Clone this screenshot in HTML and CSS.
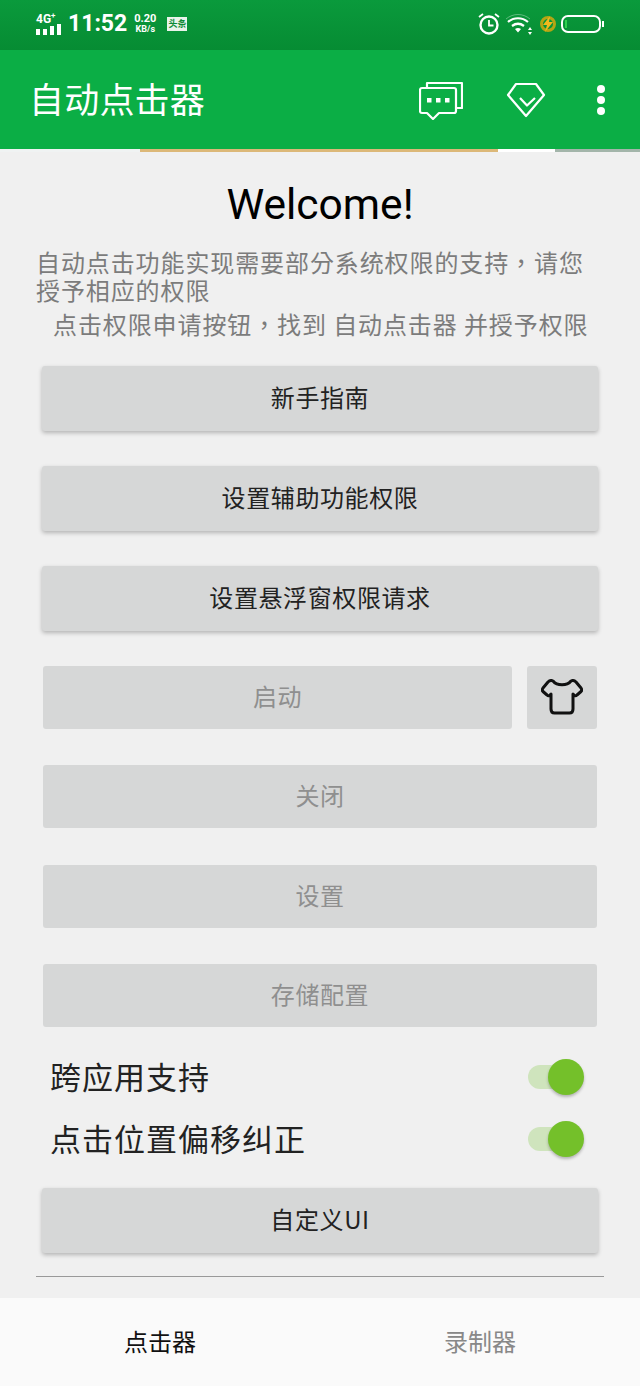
FILE: index.html
```html
<!DOCTYPE html>
<html lang="zh-CN">
<head>
    <meta charset="UTF-8">
    <title>自动点击器</title>
    <link rel="stylesheet" href="styles.css">
</head>
<body>

<header class="status">
    <div class="status-left">
        <div class="signal">
            <span class="signal-label">4G<sup>+</sup></span>
            <svg class="signal-bars" width="26" height="11" viewBox="0 0 26 11"><path fill="#fff" d="M0 5h4v6H0zM7 5h4v6H7zM14 2h4v9h-4zM21 0h4v11h-4z"/></svg>
        </div>
        <span class="clock">11:52</span>
        <div class="speed"><span>0.20</span><span class="speed-unit">KB/s</span></div>
        <span class="news">头条</span>
    </div>
    <div class="status-right">
        <svg width="24" height="24" viewBox="0 0 24 24" fill="none" stroke="#fff"><circle cx="12" cy="13" r="8.500" stroke-width="2.400"/><path stroke-width="1.800" d="M12 8v5.500h4.500M2 5l4-3M22 5l-4-3"/></svg>
        <svg width="30" height="24" viewBox="0 0 30 24" fill="none" stroke="#fff" stroke-width="2.200"><path stroke-opacity=".35" stroke-width="1" d="M1 7c7-6 17-6 24 0"/><path d="M3 10c6-5 14-5 20 0M7 14c4-3 8-3 12 0"/><path fill="#fff" stroke="none" d="M10 17c2-1.500 4-1.500 6 0l-3 3.500zM25 15l2 3h-4zM25 23l2-3h-4z"/></svg>
        <svg class="bolt" width="18" height="20" viewBox="0 0 18 20"><circle cx="9" cy="10" r="6.500" fill="none" stroke="#b3a514" stroke-width="3"/><path fill="#f2b81c" d="M11 2L4 11h4l-2 7 8-10h-4z"/></svg>
        <svg width="44" height="20" viewBox="0 0 44 20" fill="none"><rect x="1" y="2" width="38" height="16" rx="6" stroke="#fff" stroke-width="2"/><rect x="4" y="6" width="2" height="8" fill="#2fd04e"/><path stroke="#fff" stroke-width="2" d="M42 7v6"/></svg>
    </div>
</header>

<div class="toolbar">
    <h1 class="toolbar-title">自动点击器</h1>
    <div class="toolbar-icons">
        <svg class="icon-msg" width="44" height="39" viewBox="0 0 44 39" fill="none" stroke="#fff" stroke-width="2.200" stroke-linejoin="round"><path d="M8 7V2h35v25h-6"/><path d="M3 7h32a2 2 0 0 1 2 2v21a2 2 0 0 1-2 2H20l-6 6-6-6H3a2 2 0 0 1-2-2V9a2 2 0 0 1 2-2z"/><path fill="#fff" stroke="none" d="M8 17h4.500v4.500H8zM17 17h4.500v4.500H17zM26 17h4.500v4.500H26z"/></svg>
        <svg class="icon-gem" width="40" height="36" viewBox="0 0 40 36" fill="none" stroke="#fff" stroke-width="2.200" stroke-linejoin="round"><path d="M10 2h20l8 11-18 21L2 13z"/><path d="M14 16l7 7.500 8-7.500"/></svg>
        <div class="more"><i></i><i></i><i></i></div>
    </div>
</div>

<div class="strip"><span class="strip-ad"></span><span class="strip-gap"></span><span class="strip-end"></span></div>

<main class="content">
    <h2 class="welcome">Welcome!</h2>
    <p class="intro" lang="zh-Hant">自动点击功能实现需要部分系统权限的支持，请您授予相应的权限</p>
    <p class="hint" lang="zh-Hant">点击权限申请按钮，找到 自动点击器 并授予权限</p>

    <div class="actions">
        <button class="btn">新手指南</button>
        <button class="btn">设置辅助功能权限</button>
        <button class="btn">设置悬浮窗权限请求</button>
        <div class="btn-row">
            <button class="btn btn-off btn-grow">启动</button>
            <button class="btn btn-off btn-icon" aria-label="皮肤">
                <svg width="42" height="36" viewBox="0 0 42 36" fill="none" stroke="#111" stroke-width="3" stroke-linejoin="round"><path d="M12 2c4 5 14 5 18 0 2-1 4 0 5 1l5 6c1 1.500 1 2.500 0 3.500L36 16c-1 1-2 1-3 0l-1-1v15c0 2.500-1 4-3.500 4h-15C11 34 10 32.500 10 30V15l-1 1c-1 1-2 1-3 0l-4-3.500c-1-1-1-2 0-3.500l5-6c1-1 3-2 5-1z"/></svg>
            </button>
        </div>
        <button class="btn btn-off">关闭</button>
        <button class="btn btn-off">设置</button>
        <button class="btn btn-off">存储配置</button>
    </div>

    <div class="switches">
        <label class="switch-row"><span>跨应用支持</span><span class="switch"><i></i></span></label>
        <label class="switch-row"><span>点击位置偏移纠正</span><span class="switch"><i></i></span></label>
    </div>

    <button class="btn btn-custom">自定义UI</button>
    <hr class="divider">
</main>

<nav class="tabs">
    <span class="tab tab-active">点击器</span>
    <span class="tab">录制器</span>
</nav>

</body>
</html>
```

FILE: styles.css
```css
* {
    margin: 0;
    padding: 0;
    box-sizing: border-box;
}

html, body {
    height: 1386px;
    overflow: hidden;
}

body {
    display: flex;
    flex-direction: column;
    background: #f0f0f0;
    font-family: "Noto Sans CJK SC", Roboto, sans-serif;
}

/* status bar */
.status {
    height: 50px;
    background: linear-gradient(#0a9a3c, #068c33);
    color: #fff;
    display: flex;
    justify-content: space-between;
    align-items: center;
    padding: 0 35px 2px 36px;
}
.status-left, .status-right {
    display: flex;
    align-items: center;
}
.status-right {
    gap: 4px;
}
.signal {
    width: 26px;
    display: flex;
    flex-direction: column;
    font: bold 12px/11px Roboto, sans-serif;
}
.signal-label sup {
    font-size: 8px;
    line-height: 0;
}
.signal-bars {
    margin-top: -1px;
}
.clock {
    font: bold 23px/30px Roboto, sans-serif;
    margin-left: 6px;
}
.speed {
    display: flex;
    flex-direction: column;
    align-items: center;
    font: bold 11px/11px Roboto, sans-serif;
    margin-left: 7px;
}
.speed-unit {
    font-size: 9px;
}
.news {
    width: 20px;
    height: 14px;
    margin-left: 11px;
    background: #e9f3ea;
    color: #0a8a35;
    font: bold 9px/14px "Noto Sans CJK SC", sans-serif;
    text-align: center;
}

/* toolbar */
.toolbar {
    height: 99px;
    background: #0bae45;
    display: flex;
    justify-content: space-between;
    align-items: center;
    padding: 0 35px 0 29px;
}
.toolbar-title {
    color: #fff;
    font-size: 35px;
    font-weight: 400;
    line-height: 50px;
    letter-spacing: .2px;
    padding-bottom: 3px;
}
.toolbar-icons {
    display: flex;
    align-items: center;
}
.icon-msg {
    margin-top: 2px;
}
.icon-gem {
    margin: 1px 0 0 43px;
}
.more {
    margin-left: 51px;
    display: flex;
    flex-direction: column;
    gap: 3px;
}
.more i {
    width: 8px;
    height: 8px;
    border-radius: 50%;
    background: #fff;
}

/* thin banner left over below the toolbar */
.strip {
    height: 3px;
    display: flex;
    background: #f0f3f3;
}
.strip-ad {
    width: 358px;
    margin-left: 140px;
    background: #dcb878;
}
.strip-gap {
    width: 57px;
    background: #fff;
}
.strip-end {
    flex: 1;
    background: #a3b5aa;
}

.content {
    flex: 1;
    display: flex;
    flex-direction: column;
    padding: 0 36px;
}
.welcome {
    font: 400 42.500px/56px Roboto, sans-serif;
    color: #000;
    text-align: center;
    margin-top: 25px;
}
.intro, .hint {
    font-family: "Noto Sans CJK TC", sans-serif;
    font-size: 24px;
    line-height: 28px;
    color: #7c7c7c;
    letter-spacing: .9px;
}
.intro {
    margin-top: 15px;
}
.hint {
    margin-top: 6px;
    padding-left: 17px;
    white-space: nowrap;
}

.actions {
    margin-top: 28px;
    display: flex;
    flex-direction: column;
    gap: 35px;
    padding: 0 6px;
}
.btn {
    display: block;
    width: 100%;
    height: 65px;
    padding-bottom: 3px;
    border: 0;
    border-radius: 3px;
    background: #d6d7d7;
    color: #222;
    font: 400 24px/30px "Noto Sans CJK SC", sans-serif;
    letter-spacing: .6px;
    box-shadow: 0 2px 4px rgba(0, 0, 0, .25);
}
.btn-off {
    width: auto;
    height: 63px;
    margin: 0 1px 1.500px;
    color: #8f8f8f;
    box-shadow: none;
}
.btn-row {
    display: flex;
    gap: 15px;
    padding: 0 1px;
    margin-top: -.300px;
}
.btn-row .btn-off {
    margin: 0 0 1.500px;
}
.btn-grow {
    flex: 1;
}
.btn-icon {
    width: 70px;
    padding: 0;
    display: flex;
    align-items: center;
    justify-content: center;
}

.switches {
    margin-top: 18.300px;
}
.switch-row {
    height: 62px;
    display: flex;
    justify-content: space-between;
    align-items: center;
    padding: 0 26px 6px 14px;
    font-size: 31px;
    letter-spacing: 1px;
    color: #222;
}
.switch {
    position: relative;
    width: 50px;
    height: 24px;
    margin-top: 4px;
    border-radius: 12px;
    background: #cfe4bd;
}
.switch i {
    position: absolute;
    right: -6px;
    top: -6px;
    width: 36px;
    height: 36px;
    border-radius: 50%;
    background: #74c02a;
    box-shadow: 0 2px 3px rgba(0, 0, 0, .25);
}

.btn-custom {
    margin: 17px 6px 0;
    width: auto;
}
.divider {
    border: 0;
    border-top: 1px solid #999;
    margin-top: 23px;
}

.tabs {
    height: 88px;
    background: #fafafa;
    display: flex;
}
.tab {
    flex: 1;
    text-align: center;
    font-size: 24px;
    line-height: 85px;
    color: #888;
}
.tab-active {
    color: #111;
}
```
